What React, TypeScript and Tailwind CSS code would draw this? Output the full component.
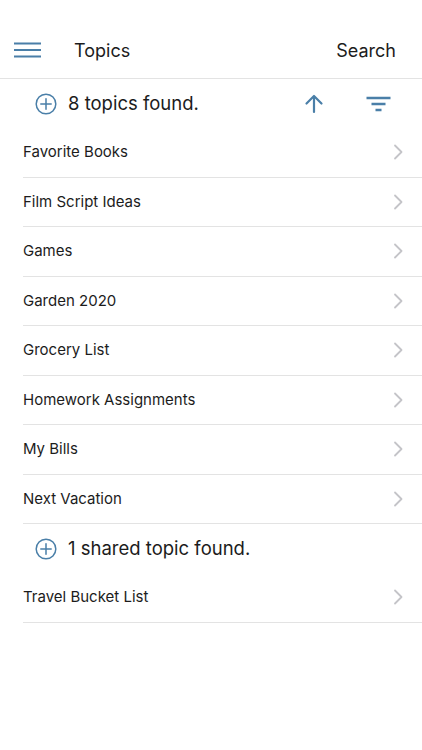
const topics = [
  "Favorite Books",
  "Film Script Ideas",
  "Games",
  "Garden 2020",
  "Grocery List",
  "Homework Assignments",
  "My Bills",
  "Next Vacation",
];

const shared = ["Travel Bucket List"];

const PlusCircle = () => (
  <svg width="22" height="22" viewBox="0 0 22 22" fill="none" stroke="#4a7fa8" strokeWidth="1.5">
    <circle cx="11" cy="11" r="9.8" />
    <path d="M11 5.8v10.4M5.8 11h10.4" strokeLinecap="round" />
  </svg>
);

const Chevron = () => (
  <svg width="10" height="16" viewBox="0 0 10 16" fill="none" stroke="#c4c4c8" strokeWidth="1.8">
    <path d="M2 1.5l6.5 6.5L2 14.5" strokeLinecap="round" strokeLinejoin="round" />
  </svg>
);

const Row = ({ title }: { title: string }) => (
  <div className="flex h-[49.5px] items-center justify-between border-b border-[#e3e3e3] pr-[19px]">
    <span className="text-[15px] text-[#1c1c1c]">{title}</span>
    <Chevron />
  </div>
);

const SectionHeader = ({ label, actions }: { label: string; actions?: boolean }) => (
  <div className="flex h-[49px] items-center pl-[35px] pr-[31px]">
    <PlusCircle />
    <span className="ml-[11px] text-[18.5px] text-[#1c1c1c]">{label}</span>
    {actions && (
      <div className="ml-auto flex items-center gap-[42px]">
        <svg width="20" height="20" viewBox="0 0 20 20" fill="none" stroke="#4a7fa8" strokeWidth="2.2">
          <path d="M10 18V2.5M2.5 9.5L10 2l7.5 7.5" strokeLinecap="round" strokeLinejoin="round" />
        </svg>
        <svg width="25" height="16" viewBox="0 0 25 16" fill="none" stroke="#4a7fa8" strokeWidth="2.4">
          <path d="M0.5 2h24M5.5 8h14M9.5 14h6" />
        </svg>
      </div>
    )}
  </div>
);

export default function App() {
  return (
    <div className="min-h-[750px] w-[422px] bg-white font-['Inter',sans-serif]">
      <div className="flex h-[79px] items-center border-b border-[#e3e3e3] pl-[14px] pr-[26px] pt-[22px]">
        <svg width="28" height="16" viewBox="0 0 28 16" fill="none" stroke="#4a7fa8" strokeWidth="2.2">
          <path d="M0 1.5h27M0 8h27M0 14.5h27" />
        </svg>
        <span className="ml-[32px] text-[18px] text-[#1c1c1c]">Topics</span>
        <span className="ml-auto text-[18px] text-[#1c1c1c]">Search</span>
      </div>

      <SectionHeader label="8 topics found." actions />
      <div className="pl-[23px]">
        {topics.map((t) => (
          <Row key={t} title={t} />
        ))}
      </div>

      <SectionHeader label="1 shared topic found." />
      <div className="pl-[23px]">
        {shared.map((t) => (
          <Row key={t} title={t} />
        ))}
      </div>
    </div>
  );
}
